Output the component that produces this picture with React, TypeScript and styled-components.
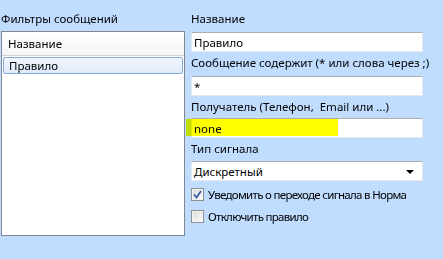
import React from "react";
import styled, { createGlobalStyle } from "styled-components";

const Global = createGlobalStyle`
  html, body { margin: 0; padding: 0; }
  body {
    background: #c0dcff;
    font-family: "Noto Sans", "DejaVu Sans", sans-serif;
    font-size: 11.5px;
    color: #000;
    width: 443px;
    height: 259px;
    overflow: hidden;
  }
`;

const Page = styled.div`
  display: flex;
  align-items: flex-start;
  width: 443px;
  height: 259px;
  padding: 8px 0 0 1px;
  box-sizing: border-box;
  gap: 6px;
`;

const LeftCol = styled.div`
  display: flex;
  flex-direction: column;
  width: 184px;
`;

const GroupLabel = styled.div`
  height: 23px;
  line-height: 22px;
  white-space: nowrap;
`;

const ListBox = styled.div`
  height: 205px;
  background: #fff;
  border: 1px solid #828790;
  box-sizing: border-box;
  display: flex;
  flex-direction: column;
  padding: 0 1px;
`;

const ListHeader = styled.div`
  height: 23px;
  line-height: 23px;
  padding-left: 6px;
  background: linear-gradient(#ffffff, #f3f4f6);
  border-bottom: 1px solid #d5d5d5;
  margin: 0 -1px;
`;

const ListRow = styled.div<{ $selected?: boolean }>`
  margin-top: 1px;
  height: 17px;
  line-height: 15px;
  padding-left: 5px;
  box-sizing: border-box;
  border: 1px solid ${(p) => (p.$selected ? "#84acdd" : "transparent")};
  border-radius: 2px;
  background: ${(p) =>
    p.$selected ? "linear-gradient(#f1f6fd, #dfeafa)" : "transparent"};
`;

const RightCol = styled.div`
  display: flex;
  flex-direction: column;
  width: 232px;
`;

const FieldLabel = styled.div<{ $h: number }>`
  height: ${(p) => p.$h}px;
  line-height: 22px;
  white-space: nowrap;
`;

const Input = styled.div`
  position: relative;
  height: 20px;
  line-height: 19px;
  padding-left: 2px;
  background: #fff;
  border: 1px solid #e3e9ef;
  border-top-color: #abadb3;
  box-sizing: border-box;
  white-space: nowrap;
`;

const Highlight = styled.span`
  position: absolute;
  left: -6px;
  top: 0px;
  width: 152px;
  height: 17px;
  background: #ffff00;
  mix-blend-mode: multiply;
  pointer-events: none;
`;

const Select = styled(Input)`
  display: flex;
  justify-content: space-between;
  align-items: center;
  padding-right: 8px;
`;

const Arrow = styled.span`
  width: 0;
  height: 0;
  border-left: 4px solid transparent;
  border-right: 4px solid transparent;
  border-top: 4px solid #000;
  margin-top: 2px;
`;

const CheckRow = styled.label`
  display: flex;
  align-items: center;
  gap: 4px;
  height: 22px;
  white-space: nowrap;
  letter-spacing: -0.7px;
`;

const Box = styled.span`
  width: 11px;
  height: 11px;
  border: 1px solid #8f8f8f;
  background: linear-gradient(135deg, #dcdcdc, #fbfbfb);
  box-shadow: inset 0 0 0 1px #f4f4f4;
  display: flex;
  align-items: center;
  justify-content: center;
`;

const Checks = styled.div`
  display: flex;
  flex-direction: column;
  margin-top: 2px;
`;

export default function App() {
  return (
    <>
      <Global />
      <Page>
        <LeftCol>
          <GroupLabel>Фильтры сообщений</GroupLabel>
          <ListBox>
            <ListHeader>Название</ListHeader>
            <ListRow $selected>Правило</ListRow>
          </ListBox>
        </LeftCol>
        <RightCol>
          <FieldLabel $h={24}>Название</FieldLabel>
          <Input>Правило</Input>
          <FieldLabel $h={24}>Сообщение содержит (* или слова через ;)</FieldLabel>
          <Input>*</Input>
          <FieldLabel $h={22}>Получатель (Телефон,&nbsp; Email или ...)</FieldLabel>
          <Input>
            <Highlight />
            none
          </Input>
          <FieldLabel $h={23}>Тип сигнала</FieldLabel>
          <Select>
            <span>Дискретный</span>
            <Arrow />
          </Select>
          <Checks>
            <CheckRow>
              <Box>
                <svg width="9" height="9" viewBox="0 0 9 9">
                  <path d="M1 4.5 L3.5 7.5 L8 1" fill="none" stroke="#3b5fa8" strokeWidth="1.8" />
                </svg>
              </Box>
              Уведомить о переходе сигнала в Норма
            </CheckRow>
            <CheckRow>
              <Box />
              Отключить правило
            </CheckRow>
          </Checks>
        </RightCol>
      </Page>
    </>
  );
}
